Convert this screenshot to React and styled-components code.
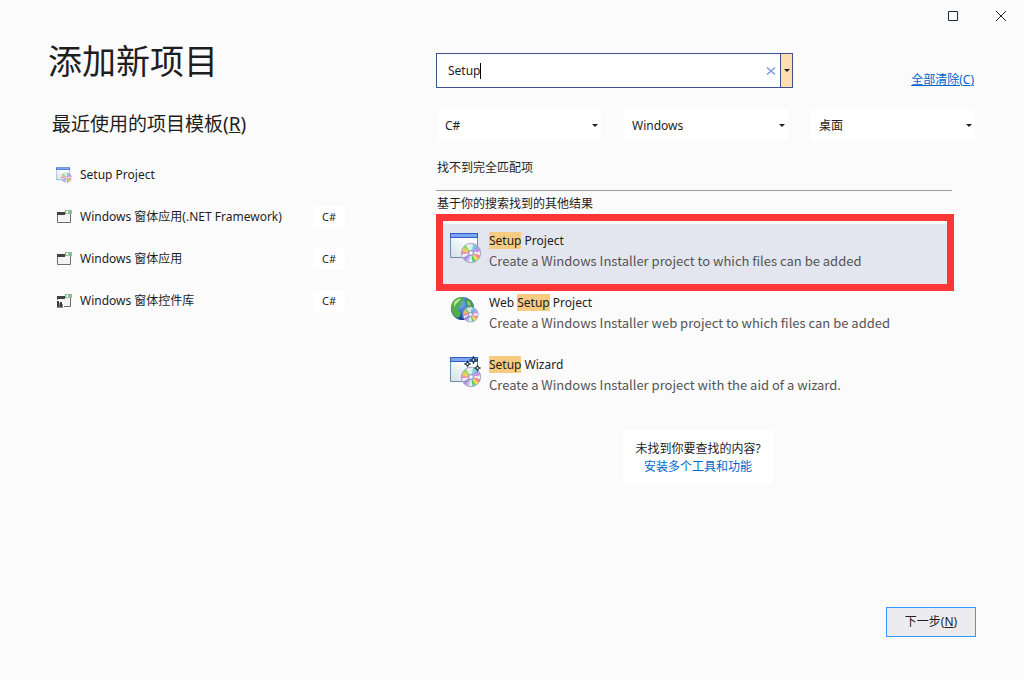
import { useId, useState } from 'react';
import styled, { createGlobalStyle } from 'styled-components';

const recentTemplates = [
  { name: 'Setup Project', icon: 'setup' },
  { name: 'Windows 窗体应用(.NET Framework)', icon: 'form', tag: 'C#' },
  { name: 'Windows 窗体应用', icon: 'form', tag: 'C#' },
  { name: 'Windows 窗体控件库', icon: 'library', tag: 'C#' },
];

const filters = [
  { label: '语言', options: ['C#', 'Visual Basic', 'C++'] },
  { label: '平台', options: ['Windows', 'Linux', 'Android'] },
  { label: '项目类型', options: ['桌面', '控制台', 'Web'] },
];

const results = [
  {
    icon: 'setup',
    name: 'Setup Project',
    description: 'Create a Windows Installer project to which files can be added',
  },
  {
    icon: 'web',
    name: 'Web Setup Project',
    description: 'Create a Windows Installer web project to which files can be added',
  },
  {
    icon: 'wizard',
    name: 'Setup Wizard',
    description: 'Create a Windows Installer project with the aid of a wizard.',
  },
];

const discColors = ['#f4eef8', '#f48fb0', '#f6c94f', '#8fd95c', '#e3f3f0', '#e6e8f2', '#6fd3d0', '#8fa3ea', '#cf8fe2', '#f1eaf6', '#f08c90', '#f5df3f', '#5fcc7c', '#dcf0ee', '#c4b2ea', '#a090da'];

function Disc({ cx, cy, r }) {
  const point = (i) => {
    const angle = (i / discColors.length) * Math.PI * 2 + 2.6;
    return `${cx + r * Math.cos(angle)} ${cy + r * Math.sin(angle)}`;
  };
  return (
    <g>
      {discColors.map((color, i) => (
        <path key={i} d={`M${cx} ${cy}L${point(i)}A${r} ${r} 0 0 1 ${point(i + 1)}Z`} fill={color} />
      ))}
      <circle cx={cx} cy={cy} r={r} fill="none" stroke="#a3a0c4" strokeWidth="0.9" />
      <circle cx={cx} cy={cy} r={r * 0.28} fill="#d4d4ea" stroke="#8e8cb4" strokeWidth="0.8" />
      <circle cx={cx} cy={cy} r={r * 0.12} fill="#fff" />
    </g>
  );
}

function WindowShape() {
  const id = useId();
  return (
    <g>
      <linearGradient id={id} x1="0" y1="1" x2="1" y2="0">
        <stop offset="0" stopColor="#cfe0e2" />
        <stop offset="0.6" stopColor="#fbfdff" />
      </linearGradient>
      <path d="M0.5 1.5H27.5V25.5H0.5Z" fill={`url(#${id})`} stroke="#6d8ea6" />
      <path d="M0 1H28V6H0Z" fill="#2f5fc4" />
      <path d="M1 2H27V5H1Z" fill="#7ca6f2" />
    </g>
  );
}

function SetupIcon({ size }) {
  return (
    <svg width={size} height={size} viewBox="0 0 32 32" aria-hidden="true">
      <WindowShape />
      <Disc cx={21} cy={21} r={9.7} />
    </svg>
  );
}

function WebIcon({ size }) {
  const id = useId();
  return (
    <svg width={size} height={size} viewBox="0 0 32 32" aria-hidden="true">
      <radialGradient id={id} cx="0.4" cy="0.3" r="0.75">
        <stop offset="0" stopColor="#7fb8f0" />
        <stop offset="0.6" stopColor="#2c62bd" />
        <stop offset="1" stopColor="#173a80" />
      </radialGradient>
      <circle cx="12.5" cy="14.5" r="11.6" fill={`url(#${id})`} />
      <path d="M2 9.5C4 5 8 3 12 3.100L14 5.500L11 8L12 10.500L8.500 13L8 16.500L11 19L9 23.500L6 23.500C2 20.500 0 14.500 2 9.500Z" fill="#4fae4a" />
      <path d="M4 8.500C6 5.500 9 4.300 11 4.500L9 7.500L6 10L4 13.500Z" fill="#b4e494" />
      <path d="M16 4.500L20 6C23 8.500 24.500 12.500 24 15.500L20 16.500L16.500 13.500L17 9.500L14.500 7.500Z" fill="#3f9a45" />
      <path d="M17 6.500L20 8L21 11.500L18 11.500Z" fill="#86cd70" />
      <Disc cx={20.5} cy={20.5} r={7.6} />
    </svg>
  );
}

function Sparkle({ x, y, r }) {
  return (
    <g>
      <path
        d={`M${x} ${y - r}L${x + 1} ${y - 1}L${x + r} ${y}L${x + 1} ${y + 1}L${x} ${y + r}L${x - 1} ${y + 1}L${x - r} ${y}L${x - 1} ${y - 1}Z`}
        fill="#17303a"
        stroke="#17303a"
        strokeWidth="0.6"
      />
      <circle cx={x} cy={y} r="0.9" fill="#dff2e4" />
    </g>
  );
}

function WizardIcon({ size }) {
  return (
    <svg width={size} height={size} viewBox="0 0 32 32" overflow="visible" aria-hidden="true">
      <WindowShape />
      <Disc cx={21} cy={21} r={9.7} />
      <Sparkle x={17.5} y={8} r={3.2} />
      <Sparkle x={23.5} y={4} r={4} />
      <Sparkle x={27.5} y={12} r={3.2} />
    </svg>
  );
}

function FormIcon({ size, library }) {
  return (
    <svg width={size} height={size} viewBox="0 0 16 16" aria-hidden="true">
      <path d="M1.5 3.5H14.5V13.5H1.5Z" fill="#f3f3f3" stroke="#6e6e6e" />
      <path d="M1 3H9V6H1Z" fill="#424242" />
      <path d="M9 0H16V5H9Z" fill="#fbfbfb" />
      <path d="M11.5 1.5H9.5V4.5H11.5M12 2H16M12 4H16M13 1V5M15 1V5" fill="none" stroke="#58a868" strokeWidth="0.9" />
      {library && (
        <>
          <path d="M0 7H8V16H0Z" fill="#fbfbfb" />
          <path d="M1 8H3V14H1ZM4 9H6V14H4Z" fill="#3c3c3c" />
          <path d="M1 14H7V15H1ZM3 10H4V14H3ZM6 11H7V14H6Z" fill="#8a8a8a" />
        </>
      )}
    </svg>
  );
}

function TemplateIcon({ kind, size }) {
  if (kind === 'setup') return <SetupIcon size={size} />;
  if (kind === 'web') return <WebIcon size={size} />;
  if (kind === 'wizard') return <WizardIcon size={size} />;
  return <FormIcon size={size} library={kind === 'library'} />;
}

function Highlight({ text, term }) {
  const at = term ? text.toLowerCase().indexOf(term.toLowerCase()) : -1;
  if (at < 0) return text;
  return (
    <>
      {text.slice(0, at)}
      <Mark>{text.slice(at, at + term.length)}</Mark>
      {text.slice(at + term.length)}
    </>
  );
}

function Arrow() {
  return (
    <ArrowSvg width="6" height="3" viewBox="0 0 6 3" aria-hidden="true">
      <path d="M0 0H6L3 3Z" fill="currentColor" />
    </ArrowSvg>
  );
}

export default function App() {
  const [query, setQuery] = useState('Setup');
  const [selected, setSelected] = useState(0);

  return (
    <>
      <GlobalStyle />
      <Dialog>
        <TitleBar>
          <WindowButton aria-label="最大化">
            <svg width="12" height="12" viewBox="0 0 12 12">
              <path d="M2.5 1.5H11.5V10.5H2.5Z" fill="none" stroke="#1e2a3c" />
            </svg>
          </WindowButton>
          <WindowButton aria-label="关闭">
            <svg width="12" height="12" viewBox="0 0 12 12">
              <path d="M2 1L12 11M12 1L2 11" stroke="#1e2a3c" />
            </svg>
          </WindowButton>
        </TitleBar>
        <Content>
          <Recent>
            <Title>添加新项目</Title>
            <Subtitle>
              最近使用的项目模板(<u>R</u>)
            </Subtitle>
            <RecentList>
              {recentTemplates.map((template) => (
                <li key={template.name}>
                  <RecentItem>
                    <TemplateIcon kind={template.icon} size={16} />
                    <RecentName>{template.name}</RecentName>
                    {template.tag && <Tag>{template.tag}</Tag>}
                  </RecentItem>
                </li>
              ))}
            </RecentList>
          </Recent>
          <Search>
            <SearchRow>
              <SearchBox>
                <SearchField>
                  <SearchInput
                    aria-label="搜索模板"
                    value={query}
                    onChange={(e) => setQuery(e.target.value)}
                  />
                  <Caret />
                </SearchField>
                <ClearButton aria-label="清除" onClick={() => setQuery('')}>
                  <svg width="10" height="10" viewBox="0 0 10 10">
                    <path d="M1 1.5L9 8.5M9 1.5L1 8.5" stroke="#7f9bdc" strokeWidth="1.6" />
                  </svg>
                </ClearButton>
                <HistoryButton aria-label="搜索历史">
                  <Arrow />
                </HistoryButton>
              </SearchBox>
              <Link href="#clear">
                <u>
                  全部清除(<u>C</u>)
                </u>
              </Link>
            </SearchRow>
            <Filters>
              {filters.map((filter) => (
                <Filter key={filter.label}>
                  <Select aria-label={filter.label}>
                    {filter.options.map((option) => (
                      <option key={option}>{option}</option>
                    ))}
                  </Select>
                  <Arrow />
                </Filter>
              ))}
            </Filters>
            <NoMatch>找不到完全匹配项</NoMatch>
            <Results>
              <ResultsHeading>基于你的搜索找到的其他结果</ResultsHeading>
              {results.map((result, i) => (
                <Result
                  key={result.name}
                  $selected={i === selected}
                  aria-pressed={i === selected}
                  onClick={() => setSelected(i)}
                >
                  <TemplateIcon kind={result.icon} size={32} />
                  <ResultText>
                    <span>
                      <Highlight text={result.name} term={query} />
                    </span>
                    <Description>{result.description}</Description>
                  </ResultText>
                </Result>
              ))}
            </Results>
            <MoreRow>
              <MoreCard>
                <span>未找到你要查找的内容?</span>
                <Link href="#install">安装多个工具和功能</Link>
              </MoreCard>
            </MoreRow>
          </Search>
        </Content>
        <Footer>
          <NextButton>
            下一步(<u>N</u>)
          </NextButton>
        </Footer>
      </Dialog>
    </>
  );
}

const GlobalStyle = createGlobalStyle`
  * {
    box-sizing: border-box;
  }
  body {
    margin: 0;
    background: #fbfbfb;
    color: #1e1e1e;
    font: 12px/16px 'Noto Sans', 'Noto Sans CJK SC', sans-serif;
  }
  button, input, select {
    font: inherit;
    color: inherit;
    border: 0;
    padding: 0;
    background: none;
  }
  svg {
    display: block;
    flex: none;
  }
`;
const Dialog = styled.div`
  display: flex;
  flex-direction: column;
  min-height: 100vh;
`;
const TitleBar = styled.header`
  display: flex;
  justify-content: flex-end;
  height: 32px;
`;
const WindowButton = styled.button`
  display: grid;
  place-items: center;
  width: 48px;
`;
const Content = styled.main`
  display: grid;
  grid-template-columns: 388px minmax(0, 1fr);
  flex: 1;
  padding: 0 48px;
`;
const Recent = styled.section`
  padding-right: 91px;
`;
const Title = styled.h1`
  margin: 5px 0 0;
  font-size: 34px;
  line-height: 48px;
  font-weight: 400;
`;
const Subtitle = styled.h2`
  margin: 25px 0 0 4px;
  font-size: 19px;
  line-height: 28px;
  font-weight: 400;
`;
const RecentList = styled.ul`
  margin: 16px 0 0;
  padding: 0;
  list-style: none;
`;
const RecentItem = styled.button`
  display: flex;
  align-items: center;
  gap: 8px;
  width: 100%;
  height: 42px;
  padding-left: 8px;
  text-align: left;
`;
const RecentName = styled.span`
  flex: 1;
  white-space: nowrap;
`;
const Tag = styled.span`
  width: 32px;
  border-radius: 4px;
  background: #fff;
  font-size: 11px;
  line-height: 22px;
  text-align: center;
`;
const Search = styled.section`
  padding-top: 21px;
`;
const SearchRow = styled.div`
  display: flex;
  align-items: flex-end;
  justify-content: space-between;
  padding-right: 2px;
`;
const SearchBox = styled.div`
  display: flex;
  width: 357px;
  height: 35px;
  border: 1px solid #41508e;
  background: #fff;
`;
const SearchField = styled.label`
  display: flex;
  align-items: center;
  flex: 1;
  padding-left: 11px;
`;
const SearchInput = styled.input`
  field-sizing: content;
  outline: none;
  caret-color: transparent;
`;
const Caret = styled.span`
  width: 1px;
  height: 16px;
  background: #000;
`;
const ClearButton = styled.button`
  display: grid;
  place-items: center;
  width: 18px;
`;
const HistoryButton = styled.button`
  display: grid;
  place-items: center;
  width: 12px;
  border-left: 1px solid #41508e;
  background: #fddfae;
`;
const ArrowSvg = styled.svg`
  color: #1e1e2e;
  pointer-events: none;
`;
const Link = styled.a`
  color: #0066cc;
  text-decoration: none;
`;
const Filters = styled.div`
  display: grid;
  grid-template-columns: repeat(3, 1fr);
  gap: 23px;
  margin-top: 21px;
  padding: 0 1px;
`;
const Filter = styled.div`
  display: grid;
  align-items: center;
  background: #fff;

  > * {
    grid-area: 1 / 1;
  }
  ${ArrowSvg} {
    justify-self: end;
    margin-right: 3px;
  }
`;
const Select = styled.select`
  appearance: none;
  width: 100%;
  height: 32px;
  padding: 2px 16px 0 8px;
`;
const NoMatch = styled.p`
  margin: 19px 1px 14px;
`;
const Results = styled.div`
  display: flex;
  flex-direction: column;
  gap: 2px;
  margin-right: 24px;
  border-top: 1px solid #9c9c9c;
`;
const ResultsHeading = styled.h3`
  margin: 5px 1px 10px;
  font-size: 12px;
  font-weight: 400;
`;
const Result = styled.button`
  position: relative;
  display: flex;
  gap: 7px;
  height: 60px;
  padding: 8px 14px;
  text-align: left;
  background: ${({ $selected }) => ($selected ? '#e3e6ee' : 'none')};

  /* marker frame that lies over the neighbouring rows */
  &::after {
    content: '';
    display: ${({ $selected }) => ($selected ? 'block' : 'none')};
    position: absolute;
    inset: -10px -2px -7px 0;
    border: 7px solid #fb3636;
  }
`;
const ResultText = styled.span`
  display: flex;
  flex-direction: column;
  gap: 4px;
  padding-top: 1px;
`;
const Mark = styled.mark`
  color: inherit;
  background: #f7cb82;
`;
const Description = styled.span`
  color: #555;
  font-family: 'Noto Sans CJK SC', sans-serif;
  font-size: 13px;
`;
const MoreRow = styled.div`
  display: flex;
  justify-content: center;
  margin: 22px 16px 0 0;
`;
const MoreCard = styled.aside`
  display: flex;
  flex-direction: column;
  align-items: center;
  gap: 2px;
  padding: 11px 12px 9px;
  background: #fff;
`;
const Footer = styled.footer`
  display: flex;
  justify-content: flex-end;
  padding: 0 48px 43px;
`;
const NextButton = styled.button`
  width: 90px;
  height: 30px;
  border: 1px solid #3399ff;
  background: #ececf0;
`;
